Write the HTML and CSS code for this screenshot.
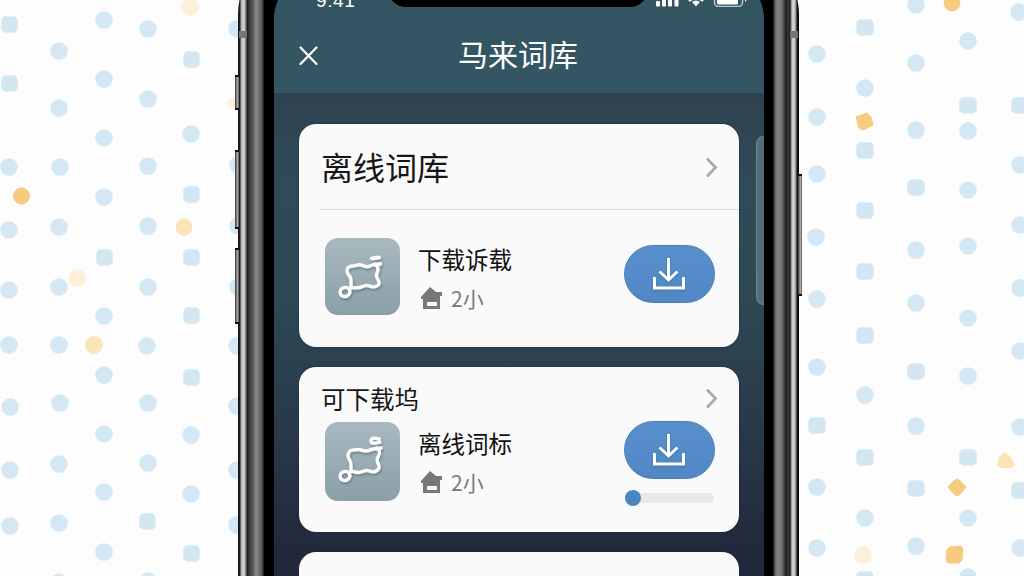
FILE: index.html
```
<!DOCTYPE html>
<html lang="zh-CN">
<head>
    <meta charset="UTF-8">
    <title>马来词库</title>
    <link rel="stylesheet" href="styles.css">
</head>
<body>
    <!-- Dotted wallpaper -->
    <svg class="dots" viewBox="0 0 1024 576">
        <path class="round" d="M9 167h.01M9 230h.01M9 290h.01M9 345h.01M10 407h.01M10 470h.01M10 526h.01
            M59 51h.01M59 108h.01M60 167h.01M59 227h.01M59 287h.01M59 345h.01M60 403h.01M59 464h.01M59 523h.01M59 582h.01
            M104 20h.01M104 79h.01M104 138h.01M104 197h.01M104 316h.01M104 375h.01M104 434h.01M104 492h.01M104 552h.01
            M148 29h.01M148 99h.01M148 166h.01M148 226h.01M148 287h.01M147 346h.01M148 403h.01M148 463h.01M148 581h.01
            M191 134h.01M191 435h.01M191 494h.01
            M237 29h.01M238 165h.01M238 226h.01M238 287h.01M237 346h.01M237 406h.01M237 470h.01M237 525h.01
            M817 54h.01M817 117h.01M817 174h.01M816 237h.01M817 299h.01M817 367h.01M817 487h.01M817 548h.01
            M865 88h.01M865 395h.01M865 518h.01
            M916 5h.01M916 63h.01M916 130h.01M916 250h.01M916 303h.01M916 426h.01M916 546h.01
            M968 41h.01M968 131h.01M968 190h.01M968 246h.01M968 318h.01M968 376h.01M968 518h.01M968 577h.01
            M1019 12h.01M1020 165h.01M1020 225h.01M1020 288h.01M1020 351h.01M1020 427h.01M1020 548h.01"/>
        <path class="square" d="M6 21h7v7h-7zM6 80h7v7h-7zM101 254h7v7h-7zM144 518h7v7h-7zM188 56h7v7h-7zM188 191h7v7h-7zM188 254h7v7h-7z
            M188 312h7v7h-7zM188 374h7v7h-7zM188 550h7v7h-7zM813 422h8v7h-8zM861 24h8v7h-8zM861 147h8v7h-8z
            M861 207h8v7h-8zM861 268h8v7h-8zM861 332h8v7h-8zM861 454h8v7h-8zM861 576h8v7h-8zM912 184h8v7h-8z
            M912 368h8v7h-8zM912 485h8v7h-8zM964 102h8v7h-8zM964 454h8v7h-8zM1016 102h8v7h-8zM1016 487h8v7h-8z"/>
        <circle class="cream" cx="190" cy="7" r="9"/>
        <circle class="cream" cx="77" cy="278" r="9"/>
        <circle class="cream" cx="232" cy="103" r="5"/>
        <circle class="cream" cx="863" cy="555" r="9"/>
        <circle class="sand" cx="184" cy="227" r="8.5"/>
        <circle class="sand" cx="94" cy="345" r="9"/>
        <path class="sand" d="M1005 452l6 5 4 8-4 3h-11l-3-3 2-8z"/>
        <circle class="orange" cx="21.500" cy="196" r="8"/>
        <circle class="orange" cx="952" cy="3" r="8"/>
        <path class="orange" d="M856 117l11-4 4 4 2 8-10 5-4-2z"/>
        <path class="orange" d="M957 479q2 0 9 8-7 9-9 9t-9-9q7-8 9-8z"/>
        <path class="orange" d="M949 547l12-1 2 3-1 11-3 3h-11l-2-3 1-10z"/>
    </svg>

    <div class="phone">
        <span class="side-key mute"></span>
        <span class="side-key volume-up"></span>
        <span class="side-key volume-down"></span>
        <span class="side-key power"></span>
        <span class="antenna antenna-left"></span>
        <span class="antenna antenna-right"></span>

        <div class="screen">
            <div class="notch"></div>
            <span class="next-panel"></span>
            <header class="header">
                <div class="status-bar">
                    <span class="time">9:41</span>
                    <svg class="status-icons" width="94" height="22" viewBox="0 0 94 22">
                        <g fill="#fff">
                            <rect x="1" y="16" width="4" height="5.500" rx="1"/>
                            <rect x="7" y="12" width="4" height="9.500" rx="1"/>
                            <rect x="13" y="8" width="4" height="13.500" rx="1"/>
                            <rect x="19.500" y="5" width="4" height="16.500" rx="1"/>
                            <path d="M41 21.500l-4-4.500q4-3 8 0z"/>
                            <rect x="62" y="8" width="21" height="11.500" rx="1.500"/>
                            <path d="M90 12v5q3-2.500 0-5z"/>
                        </g>
                        <path d="M34 16q7-6 14 0" fill="none" stroke="#fff" stroke-width="2.500"/>
                        <rect x="59.500" y="5" width="28" height="16.500" rx="4" fill="none" stroke="#b7c5cb" stroke-width="1.500"/>
                    </svg>
                </div>
                <div class="nav">
                    <svg class="close" width="20" height="20" viewBox="0 0 20 20"><path d="M1.500 1.500l16 16.500M17.500 1.500L1.500 18"/></svg>
                    <h1>马来词库</h1>
                </div>
            </header>

            <main class="list">
                <section class="card card-main">
                    <div class="card-head">
                        <h2>离线词库</h2>
                        <svg class="chevron" width="14" height="20" viewBox="0 0 14 20"><path d="M2 1.500l8.500 9-8.500 9"/></svg>
                    </div>
                    <div class="item">
                        <svg class="thumb" viewBox="0 0 75 77">
                            <g>
                                <path d="M26 49V43C27 39 22 37 22 33S25 28 28 28 33 26 36 27 42 30 45 28L50 26C53 28 54 32 52 35S53 41 54 44 51 49 48 49 43 46 39 48 33 50 30 50 27 49 24 51"/>
                                <ellipse cx="20" cy="54" rx="5" ry="4.500" transform="rotate(-25 20 54)"/>
                                <path class="thick" d="M47 20.500l7-1M51 27l4-1"/>
                            </g>
                        </svg>
                        <div class="info">
                            <h3>下载诉载</h3>
                            <p>
                                <svg class="house" width="22" height="22" viewBox="0 0 22 22"><path fill-rule="evenodd" d="M9 0l6 5h6v4h-2v13H2V12H0v-2zM6 15v4h10v-4z"/></svg>
                                2小
                            </p>
                        </div>
                        <div class="actions">
                            <button class="download">
                                <svg width="32" height="34" viewBox="0 0 32 34"><path d="M15.500 1v21M6.500 14.500l9 8.500 9-8.500M1.500 20v11h29V20"/></svg>
                            </button>
                        </div>
                    </div>
                </section>

                <section class="card card-small">
                    <div class="card-head">
                        <h2>可下载坞</h2>
                        <svg class="chevron" width="14" height="20" viewBox="0 0 14 20"><path d="M2 .5l8.500 9-8.500 9"/></svg>
                    </div>
                    <div class="item">
                        <svg class="thumb" viewBox="0 0 75 79">
                            <g>
                                <path d="M26 49V43C27 39 22 37 23 33S25 28 28 28 33 27 36 28 42 30 45 28L52 26C55 28 55 32 53 35S53 41 54 44 51 50 48 50 43 47 39 49 33 51 30 50 27 49 24 51"/>
                                <ellipse cx="20" cy="54" rx="5" ry="4.500" transform="rotate(-25 20 54)"/>
                                <path d="M54 17q-8-2-8 2t9 1M51 27l5-1"/>
                            </g>
                        </svg>
                        <div class="info">
                            <h3>离线词标</h3>
                            <p>
                                <svg class="house" width="22" height="22" viewBox="0 0 22 22"><path fill-rule="evenodd" d="M9 0l6 5h6v4h-2v13H2V12H0v-2zM6 15v4h10v-4z"/></svg>
                                2小
                            </p>
                        </div>
                        <div class="actions">
                            <button class="download">
                                <svg width="32" height="34" viewBox="0 0 32 34"><path d="M15.500 1v21M6.500 14.500l9 8.500 9-8.500M1.500 20v11h29V20"/></svg>
                            </button>
                            <div class="progress"><span class="knob"></span></div>
                        </div>
                    </div>
                </section>

                <section class="card card-next"></section>
            </main>
        </div>
    </div>
</body>
</html>
```
FILE: styles.css
```
* {
    box-sizing: border-box;
}
body {
    margin: 0;
    height: 576px;
    overflow: hidden;
    position: relative;
    background: #fdfdfd;
    font-family: "Liberation Sans", "Noto Sans CJK SC", sans-serif;
}
h1, h2, h3, p {
    margin: 0;
    font-weight: normal;
}

/* wallpaper */
.dots {
    position: absolute;
    top: 0;
    left: 0;
    width: 1024px;
    height: 576px;
}
.round {
    fill: none;
    stroke: #d3e7f4;
    stroke-width: 17.5;
    stroke-linecap: round;
}
.square {
    fill: #d3e7f3;
    stroke: #d3e7f3;
    stroke-width: 9.5;
    stroke-linejoin: round;
}
.cream {
    fill: #fcf0db;
}
.sand {
    fill: #fce4b9;
}
.orange {
    fill: #f8ca80;
    stroke: #f8ca80;
    stroke-width: 1;
    stroke-linejoin: round;
}

/* phone body */
.phone {
    position: relative;
    width: 561px;
    height: 636px;
    margin: -60px 0 0 238px;
    padding: 30px 35px 0 36px;
    border-radius: 75px 75px 0 0;
    background: linear-gradient(90deg,
        #111 0, #222 2px, #aaa 3px, #dedbde 6px, #777 8px,
        #1d1c1e 9px, #454345 12px, #4d4c4e 14px, #8b898b 18px, #626163 23px, #414042 25px,
        #000 26px, #000 535px,
        #444 536px, #858284 539px, #7b787a 543px, #484648 546px,
        #1b1a1b 548px, #3c3a3c 550px, #1b1a1b 552px,
        #c9c5c9 554px, #dcd8dc 556px, #878387 558px,
        #161516 559px, #080808 561px);
}
.side-key {
    position: absolute;
    left: -3px;
    width: 4px;
    background: linear-gradient(90deg, #333, #aaa 60%, #555);
    border-top: 2px solid #111;
    border-bottom: 2px solid #111;
}
.mute {
    top: 135px;
    height: 35px;
}
.volume-up {
    top: 210px;
    height: 79px;
}
.volume-down {
    top: 308px;
    height: 76px;
}
.power {
    top: 234px;
    left: 560px;
    height: 122px;
}
.antenna {
    position: absolute;
    top: 91px;
    width: 8px;
    height: 7px;
    background: #777376;
}
.antenna-left {
    left: 1px;
}
.antenna-right {
    right: 1px;
}

.screen {
    position: relative;
    height: 606px;
    overflow: hidden;
    border-radius: 50px 50px 0 0;
    background: linear-gradient(#2f4251 123px, #304a57 210px, #2e4854 330px, #29394a 460px, #22293d 580px);
}
.notch {
    position: absolute;
    top: 0;
    left: 114px;
    width: 260px;
    height: 37px;
    border-radius: 0 0 18px 18px;
    background: #000;
}
.next-panel {
    position: absolute;
    top: 166px;
    right: 0;
    width: 8px;
    height: 169px;
    border: 1px solid #71868e;
    border-right: 0;
    border-radius: 10px 0 0 10px;
    background: #526d78;
}

/* header */
.header {
    height: 123px;
    padding-top: 15px;
    background: linear-gradient(#345663, #335662);
}
.status-bar {
    display: flex;
    justify-content: space-between;
    height: 23px;
    padding: 0 15px 0 42px;
    color: #fff;
}
.time {
    font-size: 19px;
    line-height: 31px;
    letter-spacing: 0.6px;
}
.nav {
    display: flex;
    align-items: center;
    height: 96px;
    padding: 0 186px 0 25px;
}
.close {
    fill: none;
    stroke: #fff;
    stroke-width: 2.2;
    stroke-linecap: round;
}
.nav h1 {
    flex: 1;
    color: #fff;
    font-size: 30px;
    line-height: 40px;
    text-align: right;
}

/* cards */
.list {
    display: flex;
    flex-direction: column;
    gap: 20px;
    padding: 31px 25px 0;
}
.card {
    border-radius: 17px;
    background: #fafafa;
    box-shadow: 0 0 2px #17232e;
}
.card-main {
    height: 223px;
}
.card-small {
    height: 165px;
    padding-top: 11px;
}
.card-next {
    height: 24px;
    border-radius: 17px 17px 0 0;
}
.card-head {
    display: flex;
    align-items: center;
    justify-content: space-between;
    padding-right: 20px;
    color: #161616;
}
.card-main .card-head {
    height: 86px;
    margin-left: 21px;
    padding-left: 1px;
    border-bottom: 1px solid #dcdcdc;
}
.card-main h2 {
    padding-bottom: 2px;
    font-size: 32px;
}
.card-small .card-head {
    height: 42px;
    padding-left: 22px;
}
.card-small h2 {
    padding-bottom: 1px;
    font-size: 24.500px;
}
.chevron {
    fill: none;
    stroke: #aaa;
    stroke-width: 2.800;
}
.item {
    display: flex;
    padding-left: 26px;
    padding-right: 24px;
}
.card-main .item {
    padding-top: 28px;
}
.card-small .item {
    padding-top: 2px;
}
.thumb {
    width: 75px;
    height: 77px;
    border-radius: 13px;
    background: linear-gradient(#a9b9c0, #8a9fa8);
    fill: none;
    stroke: #fff;
    stroke-width: 3.500;
    stroke-linecap: round;
    stroke-linejoin: round;
}
.thumb g {
    filter: drop-shadow(1px 2px 1px rgba(60, 80, 90, 0.4));
}
.thick {
    stroke-width: 4.2;
}
.card-small .thumb {
    height: 79px;
}
.info {
    flex: 1;
    padding-left: 18px;
}
.info h3 {
    height: 44px;
    color: #111;
    font-size: 23.500px;
    line-height: 47px;
}
.info p {
    display: flex;
    align-items: center;
    gap: 8px;
    height: 32px;
    padding-left: 3px;
    color: #777;
    font-family: "Noto Sans CJK SC", sans-serif;
    font-size: 21px;
}
.house {
    fill: #777;
}
.actions {
    width: 91px;
    padding-top: 7px;
}
.card-small .actions {
    padding-top: 0;
    margin-top: -1px;
}
.download {
    display: flex;
    align-items: center;
    justify-content: center;
    width: 91px;
    height: 58px;
    padding: 0 1px 0 0;
    border: 1px solid #4a80ba;
    border-radius: 29px;
    background: linear-gradient(#5890cc, #5088c6);
}
.download svg {
    fill: none;
    stroke: #fff;
    stroke-width: 3;
    filter: drop-shadow(0 1px 1px rgba(30, 70, 120, 0.4));
}
.progress {
    display: flex;
    align-items: center;
    height: 10px;
    margin: 14px 1px 0;
    border-radius: 5px;
    background: #e8e9e9;
}
.knob {
    width: 16px;
    height: 16px;
    border-radius: 50%;
    background: #4987c0;
}
```
